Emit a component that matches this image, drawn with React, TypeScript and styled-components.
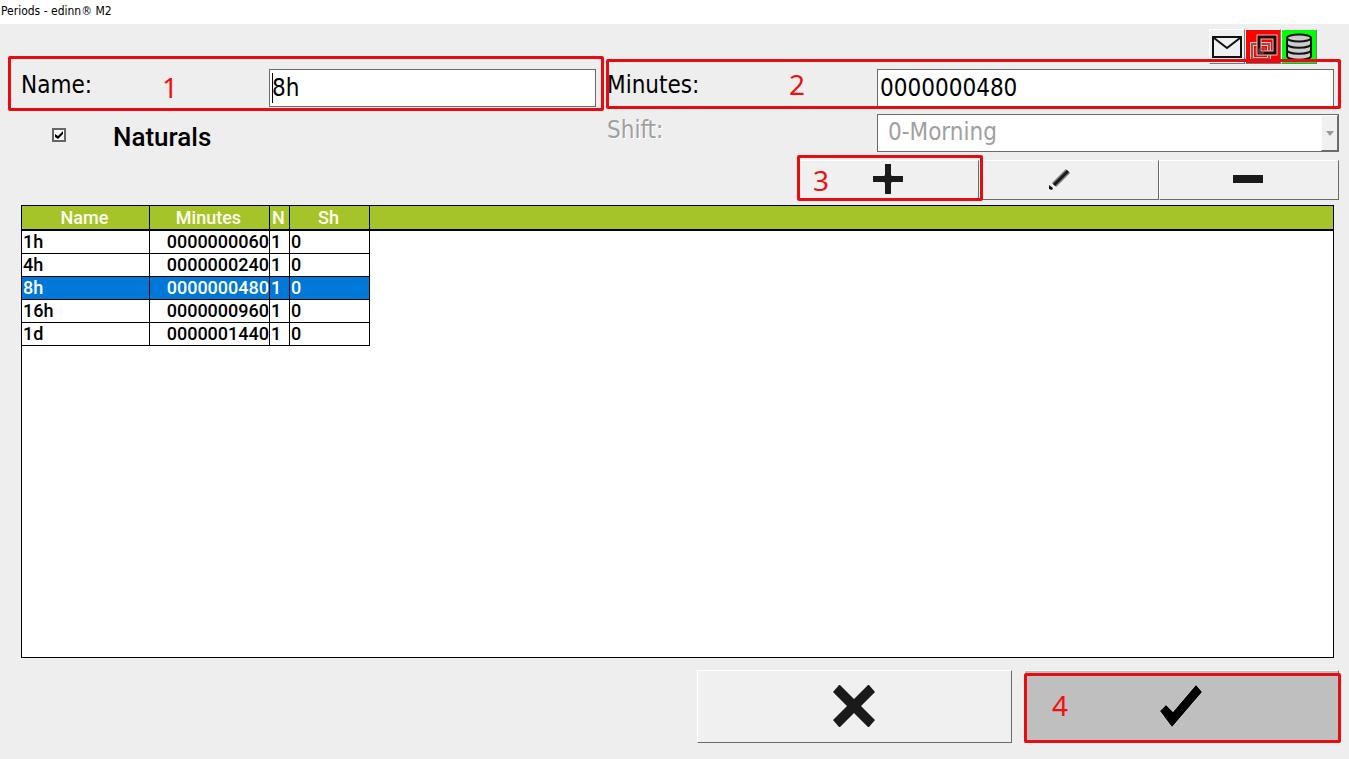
import React, { useState } from "react";
import styled, { createGlobalStyle, css } from "styled-components";

const GlobalStyle = createGlobalStyle`
  * { box-sizing: border-box; }
  body {
    margin: 0;
    background: #eeeeee;
    color: #000;
    font-family: "DejaVu Sans Condensed", "Noto Sans", sans-serif;
  }
  button, input, select { font: inherit; color: inherit; border-radius: 0; }
`;

const Page = styled.div`
  display: flex;
  flex-direction: column;
  min-height: 100vh;
`;

const TitleBar = styled.header`
  height: 24px;
  padding: 0 1px;
  background: #fff;
`;

const Title = styled.h1`
  margin: 0;
  font-size: 12px;
  font-weight: 400;
  line-height: 22px;
`;

const Content = styled.main`
  flex: 1;
  display: flex;
  flex-direction: column;
  padding: 5px 10px 16px 21px;
`;

const StatusBar = styled.div`
  display: flex;
  justify-content: flex-end;
  padding-right: 22px;
  margin-bottom: 5px;
`;

const StatusButton = styled.button<{ $fill: string }>`
  display: grid;
  place-items: center;
  width: 36px;
  height: 35px;
  padding: 0;
  background: ${(p) => p.$fill};
  border: 1px solid;
  border-color: #fff #777 #777 #fff;
`;

const Form = styled.form`
  display: grid;
  grid-template-columns: minmax(0, 575fr) minmax(0, 732fr);
  column-gap: 11px;
  row-gap: 7px;
`;

const Field = styled.div<{ $inset?: boolean }>`
  position: relative;
  display: flex;
  height: 38px;
  padding-right: ${(p) => (p.$inset ? 5 : 0)}px;
`;

const Label = styled.label<{ $width: number; $disabled?: boolean }>`
  flex: none;
  width: ${(p) => p.$width}px;
  font-size: 24px;
  line-height: 32px;
  ${(p) => p.$disabled && css`
    color: #a0a0a0;
    text-shadow: 1px 1px 0 #fff;
  `}
`;

const TextInput = styled.input`
  flex: 1;
  min-width: 0;
  height: 38px;
  padding: 0 2px;
  font-size: 24px;
  background: #fff;
  border: 1px solid #6b6b6b;
  outline: none;
`;

const Caret = styled.span`
  position: absolute;
  left: 251px;
  top: 4px;
  width: 1px;
  height: 30px;
  background: #000;
`;

const SelectBox = styled.div`
  position: relative;
  flex: 1;
  display: flex;
`;

const Select = styled.select`
  appearance: none;
  width: 100%;
  height: 38px;
  padding: 0 24px 2px 10px;
  font-size: 24px;
  background: #fff;
  border: 1px solid #6b6b6b;
  border-right-width: 2px;
  &:disabled { color: #a0a0a0; opacity: 1; }
`;

const SelectArrow = styled.span`
  position: absolute;
  top: 1px;
  right: 1px;
  bottom: 1px;
  display: grid;
  place-items: center;
  width: 17px;
  background: #f0f0f0;
  border: 1px solid;
  border-color: #fff #6b6b6b #6b6b6b #fff;
  pointer-events: none;
`;

const CheckField = styled.div`
  display: flex;
  align-items: center;
  gap: 47px;
  height: 46px;
  padding-left: 31px;
`;

const CheckBox = styled.input`
  appearance: none;
  display: grid;
  place-items: center;
  width: 14px;
  height: 14px;
  margin: 0 0 4px;
  background: #fff;
  border: 2px solid #666;
  &:checked::after {
    content: "";
    width: 8px;
    height: 8px;
    background: #000;
    clip-path: polygon(0 38%, 38% 62%, 100% 0, 100% 38%, 38% 100%, 0 75%);
  }
`;

const CheckLabel = styled.label`
  font-family: Roboto, "Noto Sans", sans-serif;
  font-size: 26px;
  font-weight: 500;
  line-height: 46px;
`;

const Actions = styled.div`
  display: flex;
  justify-content: flex-end;
  margin-bottom: 5px;
`;

const RaisedButton = styled.button<{ $size: "small" | "large"; $active?: boolean }>`
  position: relative;
  display: grid;
  place-items: center;
  width: ${(p) => (p.$size === "small" ? 180 : 315)}px;
  height: ${(p) => (p.$size === "small" ? 40 : 73)}px;
  padding: 0 2px 2px 0;
  background: ${(p) => (p.$active ? "#bfbfbf" : "#f0f0f0")};
  border: 1px solid;
  border-color: #fff #6b6b6b #6b6b6b #fff;
`;

const Callout = styled.span<{ $t: number; $r: number; $b: number; $l: number }>`
  position: absolute;
  z-index: 2;
  top: ${(p) => p.$t}px;
  right: ${(p) => p.$r}px;
  bottom: ${(p) => p.$b}px;
  left: ${(p) => p.$l}px;
  border: 3px solid #e80c10;
  border-radius: 2px;
  pointer-events: none;
`;

const CalloutNumber = styled.span<{ $x: number; $y: number }>`
  position: absolute;
  top: ${(p) => p.$y}px;
  left: ${(p) => p.$x}px;
  color: #f01010;
  font-family: "Noto Sans", "Open Sans", sans-serif;
  font-size: 28px;
  line-height: 38px;
`;

const Panel = styled.section`
  flex: 1;
  margin-right: 5px;
  background: #fff;
  border: 1px solid #000;
`;

const Table = styled.table`
  width: 100%;
  table-layout: fixed;
  border-collapse: separate;
  border-spacing: 0;
  font-family: Roboto, "Noto Sans", sans-serif;
  font-size: 18px;
  font-weight: 500;
  line-height: 22px;
`;

const Column = styled.col<{ $width?: number }>`
  width: ${(p) => (p.$width ? `${p.$width}px` : "auto")};
`;

const HeadCell = styled.th`
  height: 25px;
  padding: 0 2px 0 0;
  background: #a5c429;
  color: #fffff0;
  font-weight: 500;
  text-align: center;
  border-right: 1px solid #000;
  border-bottom: 2px solid #000;
  &:last-child { border-right: 0; }
`;

const Row = styled.tr<{ $selected: boolean }>`
  cursor: default;
  ${(p) => p.$selected && css`
    color: #fff;
    & > td:not(:last-child) { background: #0078d7; }
  `}
`;

const Cell = styled.td<{ $right?: boolean }>`
  height: 23px;
  padding: 0 0 0 1px;
  text-align: ${(p) => (p.$right ? "right" : "left")};
  border-right: 1px solid #000;
  border-bottom: 1px solid #000;
  &:last-child { border: 0; }
`;

const Footer = styled.footer`
  display: flex;
  justify-content: flex-end;
  gap: 12px;
  margin-top: 12px;
`;

const MailIcon = () => (
  <svg width="30" height="22" viewBox="0 0 30 22" fill="none" stroke="#111" strokeWidth="2">
    <path d="M1 1h28v20H1zM2 2l13 10L28 2" />
  </svg>
);

const WindowsIcon = () => (
  <svg width="30" height="30" viewBox="0 0 30 30" fill="none">
    <path d="M4 12h17v15H4z" stroke="#ffb0b0" strokeWidth="4" />
    <path d="M4 12h17v15H4z" stroke="#855" strokeWidth="2" />
    <path d="M8 16h9v7H8z" stroke="#966" strokeWidth="1" />
    <path d="M11 5h16v16H11z" stroke="#ffb0b0" strokeWidth="5" />
    <path d="M11 5h16v16H11z" stroke="#111" strokeWidth="3" />
    <path d="M14 17h-3v4h5" stroke="#855" strokeWidth="1" />
  </svg>
);

const DatabaseIcon = () => (
  <svg width="28" height="28" viewBox="0 0 28 28" fill="#ccc" stroke="#111" strokeWidth="2">
    <path d="M2 5v18c0 5 24 5 24 0V5" />
    <path d="M2 11c0 5 24 5 24 0M2 17c0 5 24 5 24 0" fill="none" />
    <ellipse cx="14" cy="5" rx="12" ry="3.5" />
  </svg>
);

const PlusIcon = () => (
  <svg width="30" height="30" viewBox="0 0 30 30" fill="#1a1a1a">
    <path d="M12 0h6v11l1 1h11v6H19l-1 1v11h-6V19l-1-1H0v-6h11l1-1z" />
  </svg>
);

const PencilIcon = () => (
  <svg width="40" height="22" viewBox="0 0 40 22">
    <path d="M6 17L20 3" stroke="#808080" strokeWidth="6" />
    <path d="M6 17L20 3" stroke="#1a1a1a" strokeWidth="3" />
    <path d="M1 17l4 3-1 2-3-1z" fill="#111" />
  </svg>
);

const MinusIcon = () => (
  <svg width="30" height="8" viewBox="0 0 30 8"><path d="M0 0h30v8H0z" fill="#1a1a1a" /></svg>
);

const CrossIcon = () => (
  <svg width="42" height="42" viewBox="0 0 42 42" fill="#1a1a1a">
    <path d="M6 0h1l14 14L35 0h1l6 7-14 14 14 14-6 7h-1L21 28 7 42H6l-6-7 14-14L0 7z" />
  </svg>
);

const TickIcon = () => (
  <svg width="42" height="42" viewBox="0 0 42 42">
    <path d="M0 26l6-6 7 7L36 0l6 7-30 35z" stroke="#fff" strokeWidth="1" paintOrder="stroke" />
  </svg>
);

const periods = [
  { name: "1h", minutes: "0000000060", natural: "1", shift: "0" },
  { name: "4h", minutes: "0000000240", natural: "1", shift: "0" },
  { name: "8h", minutes: "0000000480", natural: "1", shift: "0" },
  { name: "16h", minutes: "0000000960", natural: "1", shift: "0" },
  { name: "1d", minutes: "0000001440", natural: "1", shift: "0" },
];

export default function App() {
  const [selected, setSelected] = useState(2);
  const [name, setName] = useState("8h");
  const [minutes, setMinutes] = useState("0000000480");

  const select = (index: number) => {
    setSelected(index);
    setName(periods[index].name);
    setMinutes(periods[index].minutes);
  };

  return (
    <Page>
      <GlobalStyle />
      <TitleBar><Title>Periods - edinn® M2</Title></TitleBar>
      <Content>
        <StatusBar>
          <StatusButton $fill="#f0f0f0" aria-label="Messages"><MailIcon /></StatusButton>
          <StatusButton $fill="#ff0000" aria-label="Windows"><WindowsIcon /></StatusButton>
          <StatusButton $fill="#00ff00" aria-label="Database"><DatabaseIcon /></StatusButton>
        </StatusBar>
        <Form onSubmit={(e) => e.preventDefault()}>
          <Field>
            <Label $width={248} htmlFor="name">Name:</Label>
            <TextInput id="name" value={name} onChange={(e) => setName(e.target.value)} />
            <Caret />
            <Callout $t={-13} $r={-8} $b={-4} $l={-13} />
            <CalloutNumber $x={141} $y={-1}>1</CalloutNumber>
          </Field>
          <Field $inset>
            <Label $width={270} htmlFor="minutes">Minutes:</Label>
            <TextInput id="minutes" value={minutes} onChange={(e) => setMinutes(e.target.value)} />
            <Callout $t={-10} $r={-2} $b={-2} $l={-1} />
            <CalloutNumber $x={182} $y={-4}>2</CalloutNumber>
          </Field>
          <CheckField>
            <CheckBox type="checkbox" id="naturals" defaultChecked />
            <CheckLabel htmlFor="naturals">Naturals</CheckLabel>
          </CheckField>
          <Field>
            <Label $width={270} $disabled htmlFor="shift">Shift:</Label>
            <SelectBox>
              <Select id="shift" disabled defaultValue="0">
                <option value="0">0-Morning</option>
              </Select>
              <SelectArrow>
                <svg width="8" height="5" viewBox="0 0 8 5"><path d="M0 0h8L4 5z" fill="#999" /></svg>
              </SelectArrow>
            </SelectBox>
          </Field>
        </Form>
        <Actions>
          <RaisedButton $size="small" aria-label="Add">
            <PlusIcon />
            <Callout $t={-6} $r={-5} $b={-2} $l={-3} />
            <CalloutNumber $x={13} $y={0}>3</CalloutNumber>
          </RaisedButton>
          <RaisedButton $size="small" aria-label="Edit"><PencilIcon /></RaisedButton>
          <RaisedButton $size="small" aria-label="Remove"><MinusIcon /></RaisedButton>
        </Actions>
        <Panel>
          <Table>
            <colgroup>
              <Column $width={128} />
              <Column $width={120} />
              <Column $width={20} />
              <Column $width={80} />
              <Column />
            </colgroup>
            <thead>
              <tr>
                <HeadCell>Name</HeadCell>
                <HeadCell>Minutes</HeadCell>
                <HeadCell>N</HeadCell>
                <HeadCell>Sh</HeadCell>
                <HeadCell />
              </tr>
            </thead>
            <tbody>
              {periods.map((p, i) => (
                <Row key={p.name} $selected={i === selected} onClick={() => select(i)}>
                  <Cell>{p.name}</Cell>
                  <Cell $right>{p.minutes}</Cell>
                  <Cell>{p.natural}</Cell>
                  <Cell>{p.shift}</Cell>
                  <Cell />
                </Row>
              ))}
            </tbody>
          </Table>
        </Panel>
        <Footer>
          <RaisedButton $size="large" aria-label="Cancel"><CrossIcon /></RaisedButton>
          <RaisedButton $size="large" $active aria-label="Accept">
            <TickIcon />
            <Callout $t={2} $r={-3} $b={-1} $l={-1} />
            <CalloutNumber $x={27} $y={15}>4</CalloutNumber>
          </RaisedButton>
        </Footer>
      </Content>
    </Page>
  );
}
